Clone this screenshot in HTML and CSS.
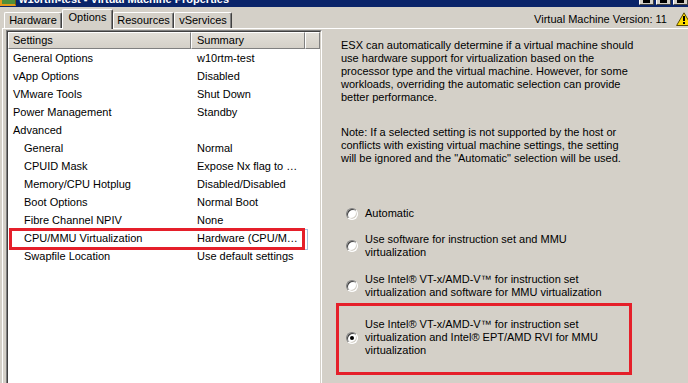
FILE: index.html
```html
<!DOCTYPE html>
<html>
<head>
<meta charset="utf-8">
<title>w10rtm-test - Virtual Machine Properties</title>
<link rel="stylesheet" href="styles.css">
</head>
<body>
<div class="window">
  <div class="titlebar">
    <span class="app-icon"></span>
    <span class="title">w10rtm-test - Virtual Machine Properties</span>
    <div class="caption-buttons">
      <span class="cbtn"><i></i></span>
      <span class="cbtn"><i></i></span>
      <span class="cbtn"><i></i></span>
    </div>
  </div>

  <div class="tabrow">
    <div class="tab tab-hw">Hardware</div>
    <div class="tab tab-opt active">Options</div>
    <div class="tab tab-res">Resources</div>
    <div class="tab tab-vs">vServices</div>
    <div class="version">Virtual Machine Version: 11</div>
    <svg class="warn" width="16" height="14" viewBox="0 0 16 14">
      <path d="M8 0.8 L15.4 13.5 H0.6 Z" fill="#ffdc00" stroke="#5a4a00" stroke-width="1"/>
      <rect x="7" y="4" width="2" height="5" fill="#000"/>
      <rect x="7" y="10" width="2" height="2" fill="#000"/>
    </svg>
  </div>

  <div class="panel">
    <div class="listbox">
      <div class="lv">
        <div class="lv-header">
          <div class="hc c1">Settings</div>
          <div class="hc c2">Summary</div>
          <div class="hc c3"></div>
        </div>
        <div class="lv-body">
          <div class="row"><span class="c1">General Options</span><span class="c2">w10rtm-test</span></div>
          <div class="row"><span class="c1">vApp Options</span><span class="c2">Disabled</span></div>
          <div class="row"><span class="c1">VMware Tools</span><span class="c2">Shut Down</span></div>
          <div class="row"><span class="c1">Power Management</span><span class="c2">Standby</span></div>
          <div class="row"><span class="c1">Advanced</span><span class="c2"></span></div>
          <div class="row sub"><span class="c1">General</span><span class="c2">Normal</span></div>
          <div class="row sub"><span class="c1">CPUID Mask</span><span class="c2">Expose Nx flag to …</span></div>
          <div class="row sub"><span class="c1">Memory/CPU Hotplug</span><span class="c2">Disabled/Disabled</span></div>
          <div class="row sub"><span class="c1">Boot Options</span><span class="c2">Normal Boot</span></div>
          <div class="row sub"><span class="c1">Fibre Channel NPIV</span><span class="c2">None</span></div>
          <div class="row sub selected"><span class="c1">CPU/MMU Virtualization</span><span class="c2">Hardware (CPU/M…</span><span class="mark mark-row"></span></div>
          <div class="row sub"><span class="c1">Swapfile Location</span><span class="c2">Use default settings</span></div>
        </div>
      </div>
    </div>

    <div class="detail">
      <p class="intro">ESX can automatically determine if a virtual machine should<br>use hardware support for virtualization based on the<br>processor type and the virtual machine. However, for some<br>workloads, overriding the automatic selection can provide<br>better performance.</p>
      <p class="note">Note: If a selected setting is not supported by the host or<br>conflicts with existing virtual machine settings, the setting<br>will be ignored and the "Automatic" selection will be used.</p>

      <div class="options">
        <div class="opt opt1"><span class="radio"></span><span class="label">Automatic</span></div>
        <div class="opt opt2"><span class="radio"></span><span class="label">Use software for instruction set and MMU<br>virtualization</span></div>
        <div class="opt opt3"><span class="radio"></span><span class="label">Use Intel® VT-x/AMD-V™ for instruction set<br>virtualization and software for MMU virtualization</span></div>
        <div class="opt opt4"><span class="radio checked"></span><span class="label">Use Intel® VT-x/AMD-V™ for instruction set<br>virtualization and Intel® EPT/AMD RVI for MMU<br>virtualization</span><span class="mark mark-opt"></span></div>
      </div>
    </div>
  </div>
</div>
</body>
</html>
```

FILE: styles.css
```css
* { box-sizing: border-box; }

html, body {
  margin: 0;
  width: 688px;
  height: 383px;
  overflow: hidden;
}

body {
  background: #d4d0c8;
  font-family: "Liberation Sans", Arial, sans-serif;
  font-size: 11px;
  color: #000;
}

.window {
  display: flex;
  flex-direction: column;
  height: 383px;
}

/* ---------- title bar ---------- */
.titlebar {
  height: 7px;
  flex: none;
  display: flex;
  background: #0a246a;
  overflow: hidden;
}

.app-icon {
  width: 16px;
  height: 6px;
  flex: none;
  background: #4f8f3a;
  border-left: 2px solid #e39a1c;
  border-bottom: 2px solid #e39a1c;
  border-right: 1px solid #6a5a10;
}

.title {
  margin: -7px 0 0 3px;
  color: #fff;
  font-weight: bold;
  font-size: 11px;
  line-height: 13px;
  white-space: nowrap;
}

.caption-buttons {
  margin-left: auto;
  display: flex;
  gap: 2px;
}

.cbtn {
  width: 15px;
  height: 5px;
  background: #d4d0c8;
  border-right: 1px solid #404040;
  border-bottom: 1px solid #404040;
  border-left: 1px solid #fff;
  display: flex;
  justify-content: center;
}

.cbtn i {
  width: 7px;
  height: 3px;
  background: #000;
}

/* ---------- tabs ---------- */
.tabrow {
  height: 21px;
  flex: none;
  display: flex;
  align-items: flex-end;
  padding-left: 4px;
  position: relative;
  z-index: 1;
}

.tab {
  height: 16px;
  line-height: 14px;
  text-align: center;
  border: 1px solid #fff;
  border-bottom: none;
  border-right-color: #404040;
  box-shadow: inset -1px 0 #808080;
  border-radius: 2px 2px 0 0;
  background: #d4d0c8;
  white-space: nowrap;
  flex: none;
}

.tab-hw { width: 58px; }
.tab-opt { width: 51px; }
.tab-res { width: 61px; }
.tab-vs { width: 58px; }

.tab.active {
  height: 20px;
  margin-bottom: -1px;
  line-height: 15px;
  padding-bottom: 3px;
  position: relative;
  z-index: 2;
}

.version {
  margin-left: auto;
  margin-right: 9px;
  margin-bottom: 1px;
  line-height: 13px;
  align-self: flex-end;
  padding-bottom: 1px;
}

.warn {
  flex: none;
  align-self: flex-start;
  margin-top: 5px;
  margin-right: -4px;
}

/* ---------- panel ---------- */
.panel {
  flex: 1;
  display: flex;
  margin-left: 2px;
  border-top: 1px solid #fff;
  border-left: 1px solid #fff;
  min-height: 0;
}

.listbox {
  width: 316px;
  flex: none;
  margin: 1px 0 0 3px;
  border: 1px solid;
  border-color: #808080 #fff #fff #808080;
  height: 400px;
}

.lv {
  height: 100%;
  border: 1px solid;
  border-color: #404040 #d4d0c8 #d4d0c8 #404040;
  background: #fff;
}

.lv-header {
  display: flex;
  height: 17px;
}

.hc {
  height: 17px;
  line-height: 15px;
  border: 1px solid;
  border-color: #fff #808080 #808080 #fff;
  background: linear-gradient(#e2dfd8, #d4d0c8);
  white-space: nowrap;
}

.lv-header .c1 { width: 183px; padding-left: 4px; }
.lv-header .c2 { width: 114px; padding-left: 5px; }
.lv-header .c3 { width: 15px; }

.row {
  display: flex;
  height: 18px;
  line-height: 19px;
  position: relative;
  white-space: nowrap;
}

.row .c1 { width: 183px; padding-left: 5px; }
.row .c2 { width: 114px; padding-left: 6px; overflow: hidden; }
.row.sub .c1 { padding-left: 16px; }

.row.selected::before {
  content: "";
  position: absolute;
  left: 1px;
  top: 0;
  width: 297px;
  height: 19px;
  border: 1px solid #a9bfdc;
}

/* red annotation boxes */
.mark {
  position: absolute;
  border: 3px solid #e51f2a;
  pointer-events: none;
}

.mark-row {
  left: 1px;
  top: -1px;
  width: 296px;
  height: 22px;
}

/* ---------- right detail ---------- */
.detail {
  margin-left: 19px;
  padding-top: 10px;
  line-height: 13px;
  white-space: nowrap;
}

.detail p { margin: 0; }
.detail .note { margin-top: 22px; }

.options {
  margin-top: 42px;
  display: flex;
  flex-direction: column;
}

.opt {
  display: flex;
  align-items: center;
  gap: 7px;
  padding-left: 5px;
  position: relative;
}

.opt2 { margin-top: 13px; }
.opt3 { margin-top: 14px; }
.opt4 { margin-top: 19px; }

.radio {
  width: 12px;
  height: 12px;
  flex: none;
  border-radius: 50%;
  border: 1px solid;
  border-color: #808080 #fff #fff #808080;
  background: #fff;
  box-shadow: inset 1px 1px #404040, inset -1px -1px #d4d0c8;
  position: relative;
}

.radio.checked::after {
  content: "";
  position: absolute;
  left: 3px;
  top: 3px;
  width: 4px;
  height: 4px;
  border-radius: 50%;
  background: #000;
}

.mark-opt {
  left: -5px;
  top: -15px;
  width: 296px;
  height: 72px;
}
```
